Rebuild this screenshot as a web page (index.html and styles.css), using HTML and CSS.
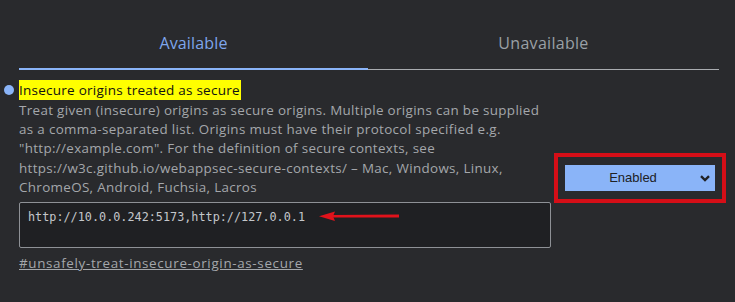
FILE: index.html
```html
<!DOCTYPE html>
<html>
<head>
<meta charset="utf-8">
<link rel="stylesheet" href="styles.css">
</head>
<body>
<div class="page">
  <div class="tabs">
    <div class="tab tab-active">Available</div>
    <div class="tab">Unavailable</div>
  </div>
  <div class="experiment">
    <span class="bullet"></span>
    <div class="exp-body">
      <h3 class="exp-title"><span class="highlight">Insecure origins treated as secure</span></h3>
      <p class="exp-desc">Treat given (insecure) origins as secure origins. Multiple origins can be supplied as a comma-separated list. Origins must have their protocol specified e.g. "http://example.com". For the definition of secure contexts, see https://w3c.github.io/webappsec-secure-contexts/ – Mac, Windows, Linux, ChromeOS, Android, Fuchsia, Lacros</p>
      <div class="origin-box">
        <span class="origin-text">http://10.0.0.242:5173,http://127.0.0.1</span>
        <svg class="arrow" width="84" height="12" viewBox="0 0 84 12">
          <path d="M14 5 L80 4.4 L80 7.4 L14 7.6 Z" fill="#e0121b"/>
          <path d="M0 6.2 L16 1.6 L14 6.2 L16 11 Z" fill="#e0121b"/>
        </svg>
      </div>
      <a class="exp-link" href="#">#unsafely-treat-insecure-origin-as-secure</a>
    </div>
    <div class="exp-control">
      <div class="red-frame">
        <div class="select">
          <span class="select-label">Enabled</span>
          <svg class="chevron" width="10" height="7" viewBox="0 0 10 7"><path d="M1 1.2 L5 5 L9 1.2" fill="none" stroke="#202124" stroke-width="2.4"/></svg>
        </div>
      </div>
    </div>
  </div>
</div>
</body>
</html>
```
FILE: styles.css
```css
html, body {
  margin: 0;
  padding: 0;
  background: #292a2d;
  width: 735px;
  height: 302px;
  overflow: hidden;
}

.page {
  font-family: "Open Sans", "Noto Sans", sans-serif;
}

.tabs {
  display: grid;
  grid-template-columns: 349px 351px;
  margin-left: 19px;
  width: 700px;
  padding-top: 33px;
}

.tab {
  text-align: center;
  font-size: 16px;
  line-height: 20px;
  letter-spacing: 0.3px;
  color: #9aa0a6;
  padding-bottom: 16px;
  border-bottom: 1px solid #a9acb0;
}

.tab-active {
  color: #7ea6ec;
  letter-spacing: 0.15px;
  border-bottom: 2px solid #8ab4f8;
  padding-bottom: 15px;
}

.experiment {
  display: flex;
  align-items: center;
  padding-top: 10px;
}

.bullet {
  align-self: flex-start;
  width: 10px;
  height: 10px;
  border-radius: 50%;
  background: #8ab4f8;
  margin: 5px 5px 0 4px;
}

.exp-body {
  width: 532px;
}

.exp-title {
  margin: 0;
  font-size: 13.5px;
  font-weight: normal;
  letter-spacing: 0.25px;
  line-height: 20px;
}

.highlight {
  background: #ffff00;
  color: #111;
  padding: 1px 1px 1px 0;
}

.exp-desc {
  margin: 1px 0 0;
  font-size: 13.4px;
  letter-spacing: 0.34px;
  line-height: 19.2px;
  color: #a4a7ab;
}

.origin-box {
  margin-top: 5px;
  height: 46px;
  border: 1px solid #8e9196;
  border-radius: 2px;
  background: #1f2023;
  box-sizing: border-box;
  padding: 5px 8px;
  display: flex;
  align-items: flex-start;
  gap: 14px;
}

.origin-text {
  font-family: "DejaVu Sans Mono", monospace;
  font-size: 11.8px;
  line-height: 18px;
  color: #c4c7cb;
}

.arrow {
  margin-top: 2px;
}

.exp-link {
  display: inline-block;
  margin-top: 6px;
  font-size: 13.4px;
  letter-spacing: 0.66px;
  line-height: 18px;
  color: #a4a7ab;
  text-decoration: underline;
}

.exp-control {
  margin-left: 3px;
  margin-top: 2px;
}

.red-frame {
  border: 4px solid #d50e17;
  padding: 8px 7px;
  width: 150px;
}

.select {
  background: #8ab4f8;
  height: 26px;
  display: flex;
  align-items: center;
  position: relative;
  justify-content: center;
  font-family: "Liberation Sans", Arial, sans-serif;
  font-size: 13px;
  color: #202124;
}

.select-label {
  margin-right: 14px;
}

.chevron {
  position: absolute;
  right: 5px;
  top: 10px;
}
```
